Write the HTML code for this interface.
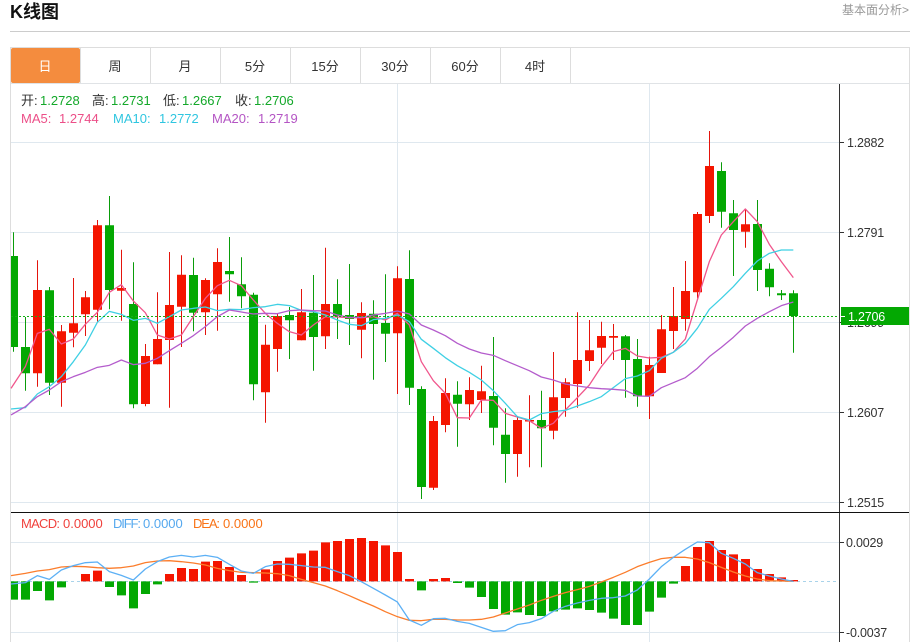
<!DOCTYPE html>
<html lang="zh"><head><meta charset="utf-8"><title>K线图</title>
<style>
html,body{margin:0;padding:0;background:#fff;width:918px;height:642px;overflow:hidden}
svg{display:block;position:absolute;left:0;top:0}
text{font-family:"Liberation Sans","Noto Sans CJK SC",sans-serif;font-size:13px;fill:#333}
.ax{font-size:12.5px;fill:#333;letter-spacing:-.2px}
.g{fill:#14a82a}.p{fill:#ec4f88}.c{fill:#2fc6e0}.u{fill:#b455c4}
.t{text-anchor:middle}
</style></head><body>
<svg width="918" height="642" viewBox="0 0 918 642" xmlns="http://www.w3.org/2000/svg">
<text x="10" y="18" style="font-size:18px;font-weight:bold;fill:#111">K线图</text>
<text x="842" y="14" style="font-size:12px;fill:#999">基本面分析&gt;</text>
<path d="M10 31.5H910" stroke="#ccc" fill="none"/>

<path d="M10.5 642V47.5H909.5V642" stroke="#ddd" fill="none"/>
<path d="M11 83.5H909" stroke="#e0e3e6" fill="none"/>
<path d="M80.5 48V83M150.5 48V83M220.5 48V83M290.5 48V83M360.5 48V83M430.5 48V83M500.5 48V83M570.5 48V83" stroke="#ddd" fill="none"/>
<rect x="11" y="48" width="69" height="35" rx="2" fill="#f48c3e"/>
<text class="t" x="45" y="71" style="fill:#fff">日</text>
<text class="t" x="115" y="71">周</text>
<text class="t" x="185" y="71">月</text>
<text class="t" x="255" y="71">5分</text>
<text class="t" x="325" y="71">15分</text>
<text class="t" x="395" y="71">30分</text>
<text class="t" x="465" y="71">60分</text>
<text class="t" x="535" y="71">4时</text>

<path d="M11 142.5H840M11 232.5H840M11 322.5H840M11 412.5H840M11 502.5H840M11 542.5H840M11 632.5H840M397.5 84V642M649.5 84V642" stroke="#dfe8ef" fill="none"/>

<path d="M11 581.5H838" stroke="#a9d3ea" stroke-dasharray="3 3" fill="none"/>

<!-- candle wicks -->
<path fill="none" stroke="#e4140c" d="M37.5 260.3V386.7M61.5 325V406.7M73.5 278V347.3M85.5 291V336M97.5 220V321.7M121.5 249.7V320.7M145.5 344V406.3M157.5 292.3V364.3M169.5 252V407.7M181.5 255.3V347M205.5 278.3V335M217.5 248.3V330.7M265.5 324.7V422.7M277.5 313V371.7M301.5 289V340.3M325.5 247.7V349M361.5 302.3V358.3M397.5 266.3V394M433.5 416V490M445.5 378.3V432.3M469.5 377.3V420M481.5 365.7V413M517.5 416V476.7M529.5 395.3V467.3M553.5 352V439.3M565.5 378.3V416.7M577.5 312.3V407.7M589.5 320V371M601.5 321.7V364M613.5 324V360M649.5 356.7V419M661.5 315V373M673.5 287V349M685.5 261V330.7M697.5 212V298.3M709.5 131V223M745.5 209V247.7"/>
<path fill="none" stroke="#0a9c0a" d="M13.5 232.3V351.7M25.5 317V390.7M49.5 287V395M109.5 196V309.3M133.5 262.3V408.3M193.5 257.7V331.3M229.5 237V301.7M241.5 257.3V308.3M253.5 292.7V400.3M289.5 307V359M313.5 275V370.7M337.5 279.3V339M349.5 264V345M373.5 300.3V379.7M385.5 274.3V362M409.5 250.3V405M421.5 386.3V499M457.5 381.3V446.7M493.5 337V445.3M505.5 408.3V482.7M541.5 390.7V467.3M625.5 335V397.7M637.5 339V406.7M721.5 162.3V227.7M733.5 200V276M757.5 200V291M769.5 263.3V296.3M781.5 290V300M793.5 290.3V352.7"/>
<!-- candle bodies -->
<path fill="#f41500" d="M33 290h9V373.3h-9zM57 331.3h9V382.7h-9zM69 323.3h9V332.7h-9zM81 297.3h9V314.3h-9zM93 225.3h9V309.7h-9zM117 288h9V290.7h-9zM141 356h9V404h-9zM153 339h9V364.3h-9zM165 305h9V340h-9zM177 274.7h9V306.7h-9zM201 280h9V312.3h-9zM213 262h9V294.3h-9zM261 344.7h9V392.3h-9zM273 316h9V349h-9zM297 312.3h9V340.3h-9zM321 304h9V336.3h-9zM357 313h9V329.7h-9zM393 278.3h9V333.3h-9zM429 421h9V487.7h-9zM441 393h9V425h-9zM465 390h9V404.3h-9zM477 391.3h9V400h-9zM513 420h9V454h-9zM525 420h9V421.5h-9zM549 397.3h9V430.7h-9zM561 382.3h9V398h-9zM573 360h9V384h-9zM585 350.3h9V361h-9zM597 336h9V347.7h-9zM609 336h9V337.7h-9zM645 365h9V396.3h-9zM657 329.3h9V373h-9zM669 316h9V331h-9zM681 291h9V319h-9zM693 214h9V292.3h-9zM705 166h9V216h-9zM741 224.3h9V231.7h-9z"/>
<path fill="#03a802" d="M11 256h7V347h-7zM21 347h9V373.3h-9zM45 290.3h9V382.7h-9zM105 225.3h9V290h-9zM129 304h9V404.3h-9zM189 275h9V312.7h-9zM225 271h9V274.3h-9zM237 284.3h9V296.3h-9zM249 294.7h9V384.3h-9zM285 315h9V320.3h-9zM309 312.7h9V337h-9zM333 304h9V316h-9zM345 315h9V319h-9zM369 313.7h9V324h-9zM381 323h9V333.7h-9zM405 279h9V387.7h-9zM417 389h9V487h-9zM453 394.7h9V403.7h-9zM489 396h9V427.7h-9zM501 434.7h9V454h-9zM537 420h9V428.3h-9zM621 336.3h9V360h-9zM633 359h9V396.3h-9zM717 171h9V211.7h-9zM729 213.3h9V230h-9zM753 224h9V270h-9zM765 268.7h9V287.3h-9zM777 293.3h9V295.3h-9zM789 293.3h9V316h-9z"/>

<!-- MA lines -->
<g transform="translate(0,215) scale(.33333)" fill="none" stroke-width="3.9" stroke-linejoin="round">
<polyline stroke="#f0568c" points="33,520 76,455 112,355 148,343 184,387 220,372 256,328 292,292 328,232 364,209 400,258 436,293 472,360 508,372 544,360 580,305 616,250 652,212 688,196 724,212 760,255 796,295 832,325 868,350 904,360 940,330 976,305 1012,306 1048,308 1084,308 1120,305 1156,315 1192,295 1228,330 1264,440 1300,497 1336,535 1372,608 1408,609 1444,555 1480,556 1516,595 1552,606 1588,617 1624,640 1660,625 1696,585 1732,548 1768,510 1804,455 1840,410 1876,400 1912,423 1948,429 1984,427 2020,412 2056,372 2092,255 2128,140 2164,60 2200,20 2236,-18 2272,20 2308,88 2344,140 2380,188"/>
<polyline stroke="#3fd0e4" points="33,582 76,578 112,537 148,515 184,485 220,440 256,390 292,322 328,289 364,298 400,316 436,310 472,325 508,305 544,285 580,280 616,276 652,287 688,283 724,284 760,278 796,275 832,268 868,272 904,286 940,290 976,300 1012,315 1048,328 1084,332 1120,314 1156,310 1192,300 1228,320 1264,373 1300,400 1336,428 1372,452 1408,472 1444,495 1480,527 1516,565 1552,605 1588,615 1624,596 1660,590 1696,586 1732,573 1768,560 1804,545 1840,518 1876,491 1912,483 1948,467 1984,430 2020,412 2056,385 2092,340 2128,283 2164,250 2200,215 2236,175 2272,138 2308,115 2344,105 2380,105"/>
<polyline stroke="#b45ccc" points="33,600 76,575 112,545 148,525 184,500 220,485 256,472 292,457 328,451 364,435 400,449 436,445 472,430 508,407 544,385 580,362 616,335 652,305 688,285 724,291 760,297 796,295 832,296 868,287 904,285 940,287 976,288 1012,300 1048,307 1084,307 1120,300 1156,295 1192,288 1228,297 1264,330 1300,345 1336,362 1372,385 1408,402 1444,414 1480,421 1516,437 1552,452 1588,467 1624,486 1660,495 1696,507 1732,513 1768,518 1804,521 1840,523 1876,526 1912,543 1948,544 1984,518 2020,503 2056,488 2092,460 2128,425 2164,397 2200,367 2236,333 2272,310 2308,290 2344,272 2380,261"/>
</g>

<path d="M11 316.5H840" stroke="#16b016" stroke-dasharray="2 2" fill="none"/>

<!-- MACD bars -->
<g transform="translate(0,430) scale(.33333)">
<path fill="#f41500" d="M243 454V432h27V454zM279 454V422h27V454zM495 454V432h27V454zM531 454V414h27V454zM567 454V417h27V454zM603 454V395h27V454zM639 454V393h27V454zM675 454V411h27V454zM711 454V435h27V454zM783 454V418h27V454zM819 454V393h27V454zM855 454V383h27V454zM891 454V370h27V454zM927 454V362h27V454zM963 454V337h27V454zM999 454V333h27V454zM1035 454V327h27V454zM1071 454V324h27V454zM1107 454V333h27V454zM1143 454V346h27V454zM1179 454V366h27V454zM1215 454V447h27V454zM1287 454V447h27V454zM1323 454V444h27V454zM2043 454V408h27V454zM2079 454V351h27V454zM2115 454V333h27V454zM2151 454V360h27V454zM2187 454V373h27V454zM2223 454V387h27V454zM2259 454V417h27V454zM2295 454V432h27V454zM2331 454V442h27V454zM2367 454V450h27V454z"/>
<path fill="#03a802" d="M33 454V509h21V454zM63 454V509h27V454zM99 454V483h27V454zM135 454V511h27V454zM171 454V472h27V454zM315 454V471h27V454zM351 454V496h27V454zM387 454V535h27V454zM423 454V492h27V454zM459 454V463h27V454zM747 454V458h27V454zM1251 454V481h27V454zM1359 454V459h27V454zM1395 454V473h27V454zM1431 454V501h27V454zM1467 454V537h27V454zM1503 454V554h27V454zM1539 454V547h27V454zM1575 454V555h27V454zM1611 454V558h27V454zM1647 454V544h27V454zM1683 454V539h27V454zM1719 454V535h27V454zM1755 454V540h27V454zM1791 454V548h27V454zM1827 454V566h27V454zM1863 454V585h27V454zM1899 454V585h27V454zM1935 454V545h27V454zM1971 454V503h27V454zM2007 454V461h27V454z"/>
<g fill="none" stroke-width="3.9" stroke-linejoin="round">
<polyline stroke="#fb7d2c" points="33,437 76,430 112,423 148,419 184,411 220,409 256,410 292,413 328,415 364,413 400,408 436,398 472,393 508,392 544,395 580,399 616,405 652,415 688,422 724,427 760,428 796,429 832,431 868,437 904,448 940,458 976,468 1012,482 1048,497 1084,513 1120,528 1156,545 1192,560 1228,571 1264,572 1300,568 1336,568 1372,570 1408,570 1444,568 1480,561 1516,549 1552,537 1588,525 1624,511 1660,499 1696,488 1732,479 1768,469 1804,456 1840,442 1876,427 1912,410 1948,397 1984,386 2020,382 2056,382 2092,387 2128,398 2164,412 2200,426 2236,438 2272,447 2308,452 2344,453 2380,454"/>
<polyline stroke="#5cb0f5" points="33,462 76,458 112,437 148,448 184,420 220,407 256,398 292,396 328,425 364,436 400,450 436,417 472,395 508,381 544,376 580,381 616,376 652,382 688,403 724,423 760,430 796,410 832,402 868,403 904,407 940,411 976,412 1012,425 1048,437 1084,455 1120,475 1156,495 1192,516 1228,570 1264,586 1300,566 1336,565 1372,574 1408,580 1444,592 1480,604 1516,602 1552,584 1588,578 1624,566 1660,544 1696,529 1732,519 1768,511 1804,505 1840,503 1876,498 1912,480 1948,447 1984,410 2020,382 2056,358 2092,336 2128,338 2164,370 2200,385 2236,402 2272,428 2308,438 2344,447 2380,454"/>
</g>
</g>

<!-- axes -->
<path d="M839.5 84V642" stroke="#333" fill="none"/>
<path d="M11 512.5H909" stroke="#111" fill="none"/>
<path d="M840 142.5h4M840 232.5h4M840 322.5h4M840 412.5h4M840 502.5h4M840 542.5h4M840 632.5h4" stroke="#333" fill="none"/>

<text class="ax" x="847" y="147">1.2882</text>
<text class="ax" x="847" y="237">1.2791</text>
<text class="ax" x="847" y="327">1.2699</text>
<text class="ax" x="847" y="417">1.2607</text>
<text class="ax" x="847" y="507">1.2515</text>
<text class="ax" x="846" y="547">0.0029</text>
<text class="ax" x="846" y="637">-0.0037</text>

<rect x="841" y="307" width="68" height="18" fill="#03a802"/>
<path d="M841 316.5h4" stroke="#fff" fill="none"/>
<text class="ax" x="848" y="321" style="fill:#fff">1.2706</text>

<!-- legend -->
<text x="21" y="105">开:</text><text class="g" x="40" y="105">1.2728</text>
<text x="92" y="105">高:</text><text class="g" x="111" y="105">1.2731</text>
<text x="163" y="105">低:</text><text class="g" x="182" y="105">1.2667</text>
<text x="235" y="105">收:</text><text class="g" x="254" y="105">1.2706</text>
<text class="p" x="21" y="123">MA5:</text><text class="p" x="59" y="123">1.2744</text>
<text class="c" x="113" y="123">MA10:</text><text class="c" x="159" y="123">1.2772</text>
<text class="u" x="212" y="123">MA20:</text><text class="u" x="258" y="123">1.2719</text>

<text x="21" y="528" textLength="39" style="fill:#f0413c">MACD:</text><text x="63" y="528" style="fill:#f0413c">0.0000</text>
<text x="113" y="528" textLength="28" style="fill:#55a8ee">DIFF:</text><text x="143" y="528" style="fill:#55a8ee">0.0000</text>
<text x="193" y="528" textLength="27" style="fill:#f97316">DEA:</text><text x="223" y="528" style="fill:#f97316">0.0000</text>
</svg>
</body></html>
